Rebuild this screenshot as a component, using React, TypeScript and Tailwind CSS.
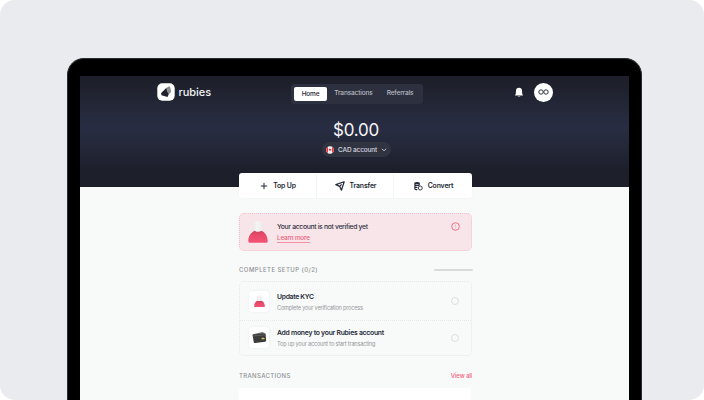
import type { ReactNode } from "react";

function Avatar({ className }: { className: string }) {
  return (
    <svg viewBox="0 0 20 23" className={className}>
      <defs>
        <linearGradient id="body" x1="0" y1="0" x2="0" y2="1">
          <stop offset="0" stopColor="#c9455e" />
          <stop offset=".4" stopColor="#e84a68" />
          <stop offset="1" stopColor="#f45478" />
        </linearGradient>
        <linearGradient id="head" x1="0" y1="0" x2="1" y2="0">
          <stop offset="0" stopColor="#e9e9e8" />
          <stop offset=".4" stopColor="#f5f5f4" />
          <stop offset="1" stopColor="#ecebea" />
        </linearGradient>
      </defs>
      <path d="M.3 20.200C.3 14 4.200 9.200 10 9.200s9.700 4.800 9.700 11c0 1.200-.9 1.500-2 1.500H2.300c-1.100 0-2-.3-2-1.500Z" fill="url(#body)" />
      <path d="M5.200 5a4.800 4.900 0 0 1 9.600 0v2.300c0 2-2 3.500-4.800 3.500S5.200 9.300 5.200 7.300Z" fill="url(#head)" />
    </svg>
  );
}

function Wallet() {
  return (
    <svg viewBox="0 0 15 13" className="h-[13px] w-[15px]">
      <path d="M1 3.200 10.500 1l1.300.7.3 2.300L1 5Z" fill="#777" />
      <path d="M.8 3.500 12.500 2.300c.8 0 1 .4 1.100 1l.5 6.300c0 .7-.3 1.100-1 1.200l-9.900 1.300c-.8.100-1.200-.2-1.400-.9L.6 4.300Z" fill="#3a3a3b" />
      <path d="m1 5 12.700-1.200" stroke="#777" strokeWidth=".6" />
      <rect x="9.500" y="6.800" width="3" height="1.500" rx=".4" fill="#d9c766" />
    </svg>
  );
}

function Action({ icon, label, last = false }: { icon: ReactNode; label: string; last?: boolean }) {
  return (
    <div className={`flex items-center justify-center gap-[5px] pl-[1px] text-[6.900px] font-semibold tracking-[-0.15px] text-[#1b1f30] ${last ? "" : "border-r border-[#f3f5f5]"}`}>
      {icon}
      <span>{label}</span>
    </div>
  );
}

function SetupRow({ icon, title, detail, className }: { icon: ReactNode; title: ReactNode; detail: ReactNode; className: string }) {
  return (
    <div className={`flex items-center pl-[9px] pr-[12px] ${className}`}>
      <div className="flex h-[21px] w-[20px] items-center justify-center rounded-[4px] bg-white shadow-[0_0_3px_rgba(0,0,0,0.06)]">{icon}</div>
      <div className="ml-[8px] mt-[1px] flex-1 whitespace-nowrap">
        <div className="h-[12px] text-[6.800px] font-semibold leading-[9px] text-[#252938]">{title}</div>
        <div className="h-[8px] text-[5.600px] leading-[8px] text-[#94979a]">{detail}</div>
      </div>
      <div className="size-[8px] rounded-full border border-[#dcdfdf]" />
    </div>
  );
}

export default function App() {
  return (
    <div className="h-[400px] w-[704px] overflow-hidden bg-white font-['Inter','Liberation_Sans',sans-serif]">
      <div className="h-full overflow-hidden rounded-[15px] bg-[#eaebef] pl-[67px] pt-[58px]">
        <div className="h-[360px] w-[575px] rounded-t-[17px] border-[1.500px] border-b-0 border-[#292c2d] bg-black px-[12px] pt-[17px]">
          <div className="h-full w-[549px] bg-[#f8faf9]">
            <header className="h-[111px] bg-[linear-gradient(180deg,#1d1e29_0%,#202330_16%,#282d43_46%,#242839_62%,#1d1f2b_85%,#1c1e29_100%)]">
              <div className="flex h-[34px] items-center pl-[77px] pr-[76px]">
                <div className="mt-[-3px] flex w-[134px] items-center gap-[3.500px]">
                  <svg viewBox="0 0 18 18" className="size-[18px]">
                    <rect x=".3" y=".3" width="17.400" height="17.400" rx="5" fill="white" />
                    <path d="m9.200 5 3-1.800 1 .8 1 4.900-2.600 2.400-4.300-2.100Z" fill="#8c8c91" />
                    <path d="M9.200 5 4 10.300l.5 1.900 6.100 1.800 1.200-3-1.700-2.200Z" fill="#20212a" />
                  </svg>
                  <span className="text-[11px] font-medium leading-[14px] tracking-[-0.02px] text-[#f3f3f5]">rubies</span>
                </div>
                <nav className="mt-[1px] grid h-[20px] w-[132px] grid-cols-[33px_52px_41px] items-center rounded-[3px] bg-[#2d303e] pl-[3px] text-center text-[6.500px] font-medium text-[#b9bbc3]">
                  <span className="h-[14px] rounded-[2px] bg-white leading-[14px] tracking-[-0.2px] text-[#1f2330]">Home</span>
                  <span className="pl-[1px] pt-[1px] tracking-[-0.14px]">Transactions</span>
                  <span className="pl-[1px] pt-[1px] tracking-[-0.15px]">Referrals</span>
                </nav>
                <div className="ml-auto mt-[-2px] flex items-center gap-[10px]">
                  <svg viewBox="0 0 10 11" className="h-[11px] w-[10px]">
                    <path d="M5 .8c-1.900 0-2.900 1.200-3 2.800L1.800 6.700 1 8.400h8l-.8-1.700L8 3.600C7.900 2 6.900.8 5 .8Z" fill="white" />
                    <path d="M3.500 9.200h3c-.3.600-.8.800-1.500.8s-1.200-.2-1.500-.8Z" fill="#c9cbd1" />
                  </svg>
                  <div className="flex size-[19px] items-center justify-center rounded-full bg-white">
                    <svg viewBox="0 0 11 6" className="h-[6px] w-[11px]" fill="none" stroke="#30333e">
                      <circle cx="3" cy="3" r="2.200" />
                      <circle cx="8" cy="3" r="2.200" />
                    </svg>
                  </div>
                </div>
              </div>
              <div className="ml-[3px] mt-[9px] h-[23px] text-center text-[17px] leading-[22px] tracking-[-0.250px] text-[#f5f5f7]">$0.00</div>
              <div className="ml-[242px] flex h-[15px] w-[69px] items-center rounded-full bg-[#303340] pl-[4px]">
                <svg viewBox="0 0 8 8" className="size-[8px]">
                  <circle cx="4" cy="4" r="3.800" fill="#f6f2f3" />
                  <path d="M2 .8v6.400a3.800 3.800 0 0 1 0-6.400ZM6 .8a3.800 3.800 0 0 1 0 6.400Z" fill="#e83445" />
                  <path d="m4 2.300.5.800.9.200-.5 1-.9.900-.9-.9-.5-1 .9-.2Z" fill="#e83445" />
                </svg>
                <span className="ml-[4px] mt-[1px] text-[6.500px] font-medium leading-[9px] tracking-[-0.16px] text-[#d9dae0]">CAD account</span>
                <svg viewBox="0 0 6 4" className="ml-[4px] h-[4px] w-[6px]" fill="none" stroke="#cfd0d6"><path d="m1 .8 2 2 2-2" /></svg>
              </div>
            </header>
            <main className="ml-[159px] w-[233px]">
              <div className="relative mt-[-14px] grid h-[25px] grid-cols-[78px_77px_78px] rounded-[3px] bg-white pt-[1px] shadow-[0_0_2px_rgba(0,0,0,0.05)]">
                <Action label="Top Up" icon={<svg viewBox="0 0 8 8" className="size-[8px]" stroke="#242838"><path d="M4 .8v6.400M.8 4h6.400" /></svg>} />
                <Action label="Transfer" icon={<svg viewBox="0 0 10 10" className="size-[10px]" fill="none" stroke="#242838" strokeWidth="1.200" strokeLinejoin="round"><path d="M.8 3.600 9.200.8 6.400 9.200 4.700 5.400Z" /><path d="m4.700 5.400 2-2" /></svg>} />
                <Action last label="Convert" icon={
                  <svg viewBox="0 0 10 10" className="size-[9px]" fill="none" stroke="#242838">
                    <path d="M1 1.300C1 .6 5.800.6 5.800 1.300v2.500M1 1.300v6.200c0 .7 1 1 2.700 1M1 3.400c.8.700 3.600.7 4.800 0M1 5.500c.8.500 2 .6 2.800.5M1 1.400c.8.700 4 .7 4.800 0" strokeWidth="1.300" />
                    <circle cx="7" cy="6.700" r="2.200" />
                  </svg>} />
              </div>
              <section className="mt-[15px] flex h-[38px] rounded-[5px] border border-dotted border-[#f7bfca] bg-[#f8e5e9] pl-[8px] pr-[11px]">
                <Avatar className="mt-[7px] h-[23px] w-[20px]" />
                <div className="ml-[9px] mt-[8px] flex-1 whitespace-nowrap">
                  <div className="text-[6.800px] font-medium leading-[10px] tracking-[-0.320px] text-[#30313f]">Your account is not verified yet</div>
                  <div className="mt-[2px] h-[9px] w-[33px] border-b border-[#f391a5] text-[6.300px] font-medium leading-[8px] tracking-[-0.16px] text-[#ee5a78]">Learn more</div>
                </div>
                <svg viewBox="0 0 9 9" className="mt-[8px] size-[9px]" fill="none" stroke="#f4738b">
                  <circle cx="4.500" cy="4.500" r="3.800" />
                  <path d="M4.500 2.500v2.300M4.500 5.700v.8" strokeWidth=".8" opacity=".5" />
                </svg>
              </section>
              <div className="mt-[15px] flex h-[8px] items-center justify-between text-[6px] font-medium leading-[8px] text-[#8e9193]">
                <span className="tracking-[0.450px]">COMPLETE SETUP (0/2)</span>
                <span className="mr-[-1px] h-[2px] w-[39px] rounded-full bg-[#d9dbdb]" />
              </div>
              <section className="mt-[7px] flex h-[75px] flex-col rounded-[5px] border border-dotted border-[#e4e8e7]">
                <SetupRow className="h-[38px]" icon={<Avatar className="h-[13px] w-[11px]" />} title={<span className="tracking-[-0.300px]">Update KYC</span>} detail={<span className="tracking-[-0.200px]">Complete your verification process</span>} />
                <div className="border-t border-dotted border-[#e4e8e7]" />
                <SetupRow className="h-[34px] pb-[1px]" icon={<Wallet />} title={<span className="tracking-[-0.240px]">Add money to your Rubies account</span>} detail={<span className="tracking-[-0.190px]">Top up your account to start transacting</span>} />
              </section>
              <div className="mt-[15px] flex h-[9px] items-center justify-between pt-[1px] text-[6px] font-medium leading-[8px] text-[#8e9193]">
                <span className="tracking-[0.350px]">TRANSACTIONS</span>
                <span className="tracking-[-0.130px] text-[#f05d7a]">View all</span>
              </div>
              <div className="mt-[8px] h-[14px] w-[232px] rounded-t-[3px] bg-white" />
            </main>
          </div>
        </div>
      </div>
    </div>
  );
}
